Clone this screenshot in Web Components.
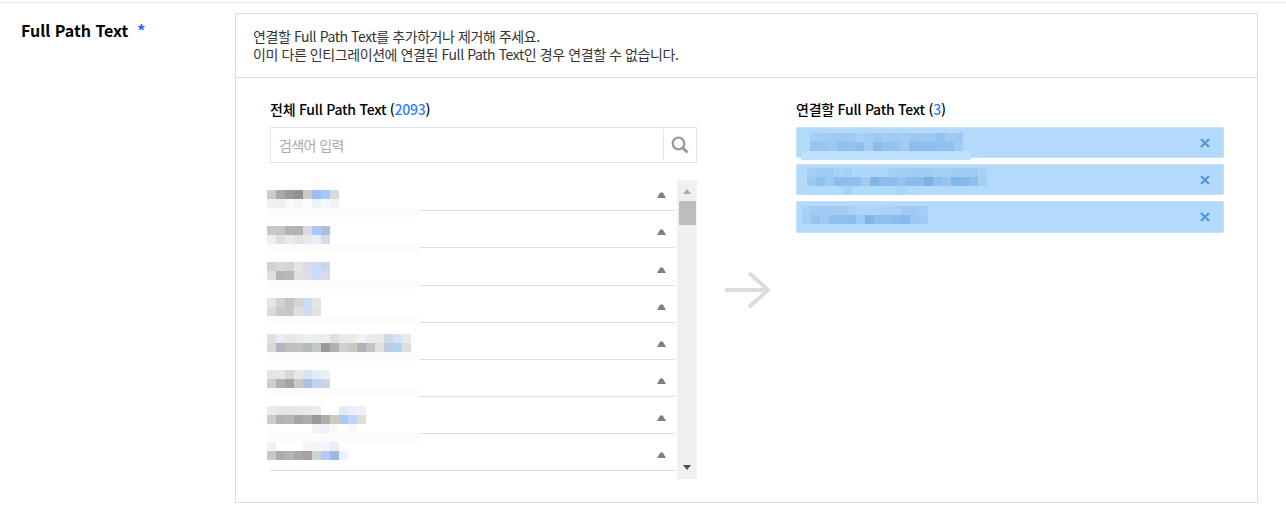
<!DOCTYPE html>
<html lang="ko">
<head>
<meta charset="utf-8">
<title>Full Path Text</title>
<style>
  html, body { margin: 0; background: #fff; }
  body { font-family: "Noto Sans CJK KR", "Noto Sans", sans-serif; color: #333; }
</style>
</head>
<body>
<form-field label="Full Path Text" required>
  <link-panel>
    <span slot="notice">연결할 Full Path Text를 추가하거나 제거해 주세요.<br>이미 다른 인티그레이션에 연결된 Full Path Text인 경우 연결할 수 없습니다.</span>

    <source-list slot="source" heading="전체 Full Path Text" count="2093">
      <list-row></list-row>
      <list-row></list-row>
      <list-row tall></list-row>
      <list-row></list-row>
      <list-row></list-row>
      <list-row></list-row>
      <list-row></list-row>
      <list-row></list-row>
      <blur-mosaic slot="overlay" style="left:-3px;top:1px" cells="fff,fff,fff,fff,fff,fcfcfc,fdfdfd,fcfcfc|cfcbc7,a9a9ab,989c9c,8e9290,cfc9c5,9cbdf7,a6c8fd,d9dadc|f0f0f0,f0f0f0,f8f9f8,f5f5f5,fdfcf8,eef2fb,f5f8ff,f2f2f2"></blur-mosaic>
      <blur-strip slot="overlay" style="left:-3px;top:28px"></blur-strip>
      <blur-mosaic slot="overlay" style="left:-3px;top:46px" cells="c9c8c6,c8c6c2,b3b3b7,b4b3b2,dcdae0,a9c8fd,a9c0dd,fbffff|eeeeee,e1dfdc,e8eaeb,e4e2e3,e8e8e9,e5edff,d2dde9"></blur-mosaic>
      <blur-strip slot="overlay" style="left:-3px;top:64px"></blur-strip>
      <blur-mosaic slot="overlay" style="left:-3px;top:82px" cells="d4d0d0,dad8d9,d0d5d4,e3e6e2,d9dce3,cbdcff,c9d6e5|e0dfdc,b7b4b7,b6b9b8,dfe1df,dcdfe5,cbdcfb,d9dce5"></blur-mosaic>
      <blur-strip slot="overlay" style="left:-3px;top:100px"></blur-strip>
      <blur-mosaic slot="overlay" style="left:-3px;top:118px" cells="e6e6e6,d3d2cb,c0c6c5,d6d3d5,cbdcfb,e6e6e6|dcdbda,c9cac9,c6c7c0,e1dfe2,ccdcf9,e2e2e2"></blur-mosaic>
      <blur-strip slot="overlay" style="left:-3px;top:136px"></blur-strip>
      <blur-mosaic slot="overlay" style="left:-3px;top:154px" cells="e2e0dd,ebedf0,e6e6e7,e9e9e7,eff1ef,ededec,eeeeed,e0dfdc,e9e9e9,eaeaea,f3f3f3,ebeae8,e8e8e6,cfd9ea,d4e3fc,e9e9eb|d9d7d2,b2b5bd,c0bebd,c4c0be,b3bab8,c3c7c5,9f999c,afb0b5,ced0d2,cbc8c0,aeb3ba,c0c3c2,e2e0dd,c0c9dd,b3d2f9,dcdde0"></blur-mosaic>
      <blur-strip slot="overlay" style="left:-3px;top:172px"></blur-strip>
      <blur-mosaic slot="overlay" style="left:-3px;top:190px" cells="e4e4e5,e8e8e3,d6d6dc,e8e8e9,dbe3f3,e3ebfc,eeeff1|cecdcf,b1b0ae,a4a4a1,c9c9d2,aec3da,bcd3fb,cdd5dd"></blur-mosaic>
      <blur-strip slot="overlay" style="left:-3px;top:208px"></blur-strip>
      <blur-mosaic slot="overlay" style="left:-3px;top:226px" cells="ecebe9,e4e5e7,e4e5e6,e6e7e7,e8e7e3,e9edf0,fff,fffffc,e6e9f5,e9f1fd,f1f1f1|cfccc6,b0b1b6,b5b6b7,a5a6a6,b0ada6,97999c,a8aeae,cdc9bd,abc9f0,bcd6fb,dcdeda|fefefe,fff,fff,fff,fff,f4f3f1,eff1f3,f8f9fa,fff,f8f8f8"></blur-mosaic>
      <blur-strip slot="overlay" style="left:-3px;top:253px"></blur-strip>
      <blur-mosaic slot="overlay" style="left:-3px;top:262px" cells="f1f1ef,fff,fff,fff,f6f6f6,f5f5f5,f3f6fd,e9edf7|cbc7c3,a6adb5,b5b7ae,aaa6ac,a5a2a0,ced5d6,b2c8fb,9fb8dd,e9f3fb"></blur-mosaic>
    </source-list>

    <target-list slot="target" heading="연결할 Full Path Text" count="3">
      <link-chip>
        <blur-strip slot="overlay" style="left:4px;top:23px;width:170px;--strip:#bfe0fd"></blur-strip>
        <blur-mosaic slot="overlay" style="left:13px;top:5px" cells="a6d0f7,a2ccf5,a0caf4,9fc9f3,9fc9f3,a8d1f7,a3cdf5,9fc9f3,a3cdf5,9fc9f3,a3cdf5,9cc7f2,9cc7f2,9cc7f2,93c2ef,9fc9f3,9cc8f3|94c4f0,9ac7f2,9fc9f3,8fbfee,94c2ef,8fbfed,a4cdf5,8bbdec,92c2ef,96c4f0,a2ccf5,8cbded,8ebfee,8ebfee,90c0ee,90c0ee,a1cbf4"></blur-mosaic>
      </link-chip>
      <link-chip>
        <blur-mosaic slot="overlay" style="left:10px;top:3px" cells="a4cef6,a0caf4,a0caf4,a9d2f8,a8d1f7,afd7fa,afd7fa,afd7fa,afd7fa,a6cff6,a3cdf5,a1cbf4,a1cbf4,a1cbf4,a4cef6,a4cef6,a1cbf4,a1cbf4,a1cbf4,a9d2f8|9bc8f2,90c0ee,9ecaf3,8bbcec,8ebfed,8ebfed,a0caf4,81b5e8,8bbcec,8bbcec,96c4f0,8abbeb,8bbcec,7bb0e5,8ec0ed,99c6f1,82b7e9,84b8e9,8ec0ed,a6cff6|b2dafb,b2dafb,b2dafb,b2dafb,a9d2f8,b2dafb,b2dafb,b2dafb,b2dafb,b2dafb,a9d2f8,b2dafb"></blur-mosaic>
      </link-chip>
      <link-chip tall>
        <blur-mosaic slot="overlay" style="left:5px;top:4px" cells="a8d1f7,a2ccf5,a0caf4,a3cdf5,a2ccf5,a7d0f7,add5f9,add5f9,abd4f8,a8d1f7,a8d1f7,9ecaf3,9ecaf3,a5cef6|a4cef6,94c3f0,9fc9f3,90c0ee,8fbfed,8dbeec,9ecaf3,81b5e8,8ec0ed,8ec0ed,8bbcec,87baea,9cc7f2,a1cbf4"></blur-mosaic>
      </link-chip>
    </target-list>
  </link-panel>
</form-field>

<script>
class FormField extends HTMLElement {
  constructor() {
    super();
    this.attachShadow({ mode: 'open' });
  }
  connectedCallback() {
    const star = this.hasAttribute('required') ? '<span class="star">*</span>' : '';
    this.shadowRoot.innerHTML = `
      <style>
        :host { display: block; border-top: 1px solid #e8e8e8; margin-top: 2px; padding: 10px 28px 0 0; }
        .wrap { display: flex; align-items: flex-start; }
        .label { width: 235px; flex: none; box-sizing: border-box; padding: 5px 0 0 21px; font-size: 16px; line-height: 24px; font-weight: 700; color: #000; }
        .star { color: #1a6dff; margin-left: 9px; }
        .content { flex: 1; min-width: 0; }
      </style>
      <div class="wrap">
        <div class="label">${this.getAttribute('label') || ''}${star}</div>
        <div class="content"><slot></slot></div>
      </div>
    `;
  }
}

class LinkPanel extends HTMLElement {
  constructor() {
    super();
    this.attachShadow({ mode: 'open' });
  }
  connectedCallback() {
    this.shadowRoot.innerHTML = `
      <style>
        :host { display: block; border: 1px solid #ddd; }
        .notice { padding: 14px 17px 14px; font-size: 14px; line-height: 17.5px; color: #333; letter-spacing: -0.42px; border-bottom: 1px solid #ddd; }
        .body { display: grid; grid-template-columns: 427px 99px 428px; padding: 22px 33px 23px 34px; }
        .arrow { display: flex; justify-content: center; padding: 170px 0 0 4px; }
        svg { display: block; }
      </style>
      <div class="notice"><slot name="notice"></slot></div>
      <div class="body">
        <slot name="source"></slot>
        <div class="arrow">
          <svg width="50" height="40" viewBox="0 0 50 40" fill="none" stroke="#dcdcdc" stroke-width="4">
            <path d="M1 20H43"/>
            <path d="M25 3L44 20L25 37"/>
          </svg>
        </div>
        <slot name="target"></slot>
      </div>
    `;
  }
}

class SourceList extends HTMLElement {
  constructor() {
    super();
    this.attachShadow({ mode: 'open' });
  }
  connectedCallback() {
    this.shadowRoot.innerHTML = `
      <style>
        :host { display: block; }
        h3 { margin: 0 0 9px; font-size: 14px; line-height: 18px; font-weight: 500; color: #000; letter-spacing: -0.25px; }
        h3 b { font-weight: 500; color: #2a7fff; }
        .list { position: relative; margin-top: 17px; height: 299px; display: flex; }
        .rows { flex: 1; min-width: 0; margin-right: 1px; }
        .track { width: 20px; flex: none; background: #f0f0f0; position: relative; display: flex; flex-direction: column; align-items: center; }
        .up { margin-top: 9px; width: 0; height: 0; border: 4.5px solid transparent; border-top: 0; border-bottom: 5px solid #a8a8a8; }
        .thumb { margin: 7px 0 0 1px; width: 17px; height: 24px; background: #bdbdbd; }
        .down { margin-top: auto; margin-bottom: 9px; width: 0; height: 0; border: 4.5px solid transparent; border-bottom: 0; border-top: 5px solid #505050; }
      </style>
      <h3>${this.getAttribute('heading')} (<b>${this.getAttribute('count')}</b>)</h3>
      <search-box placeholder="검색어 입력"></search-box>
      <div class="list">
        <div class="rows"><slot></slot></div>
        <div class="track"><div class="up"></div><div class="thumb"></div><div class="down"></div></div>
        <slot name="overlay"></slot>
      </div>
    `;
  }
}

class SearchBox extends HTMLElement {
  constructor() {
    super();
    this.attachShadow({ mode: 'open' });
  }
  connectedCallback() {
    this.shadowRoot.innerHTML = `
      <style>
        :host { display: flex; box-sizing: border-box; height: 36px; border: 1px solid #e2e2e2; }
        .input { flex: 1; padding-left: 8px; font-size: 14px; line-height: 34px; color: #aaa; letter-spacing: -0.6px; }
        .btn { width: 32px; margin: 1px 0; border-left: 1px solid #e6e6e6; display: flex; align-items: center; justify-content: center; }
        svg { display: block; }
      </style>
      <div class="input">${this.getAttribute('placeholder')}</div>
      <div class="btn">
        <svg width="18" height="18" viewBox="0 0 18 18" fill="none" stroke="#9a9a9a" stroke-width="2.3">
          <circle cx="7.5" cy="7.5" r="5.8"/>
          <path d="M11.6 11.6L16.5 16.5" stroke-width="3"/>
        </svg>
      </div>
    `;
  }
}

class ListRow extends HTMLElement {
  constructor() {
    super();
    this.attachShadow({ mode: 'open' });
  }
  connectedCallback() {
    this.shadowRoot.innerHTML = `
      <style>
        :host { display: flex; box-sizing: border-box; height: 37px; border-bottom: 1px solid #ddd; justify-content: flex-end; align-items: flex-end; border-bottom-right-radius: 2px; }
        :host(:first-child) { height: 31px; }
        :host([tall]) { height: 38px; }
        svg { display: block; margin: 0 10px 12px 0; }
      </style>
      <svg width="9" height="6" viewBox="0 0 9 6"><path d="M0 6L3.2 .4H5.8L9 6Z" fill="#808080"/></svg>
    `;
  }
}

class BlurMosaic extends HTMLElement {
  constructor() {
    super();
    this.attachShadow({ mode: 'open' });
  }
  connectedCallback() {
    // pixelated redaction blocks, 9px per cell
    const rows = (this.getAttribute('cells') || '').split('|').map((row) =>
      `<div class="r">${row.split(',').map((c) => `<i style="background:#${c}"></i>`).join('')}</div>`
    ).join('');
    this.shadowRoot.innerHTML = `
      <style>
        :host { display: block; position: absolute; }
        .r { display: flex; height: 9px; }
        i { display: block; width: 9px; height: 9px; flex: none; }
      </style>
      ${rows}
    `;
  }
}

class BlurStrip extends HTMLElement {
  constructor() {
    super();
    this.attachShadow({ mode: 'open' });
  }
  connectedCallback() {
    this.shadowRoot.innerHTML = `
      <style>
        :host { display: block; position: absolute; width: 153px; height: 9px; background: var(--strip, #fbfbfb); }
      </style>
    `;
  }
}

class TargetList extends HTMLElement {
  constructor() {
    super();
    this.attachShadow({ mode: 'open' });
  }
  connectedCallback() {
    this.shadowRoot.innerHTML = `
      <style>
        :host { display: block; }
        h3 { margin: 0 0 9px; font-size: 14px; line-height: 18px; font-weight: 500; color: #000; letter-spacing: -0.25px; }
        h3 b { font-weight: 500; color: #2a7fff; }
        .chips { display: flex; flex-direction: column; gap: 6px; }
      </style>
      <h3>${this.getAttribute('heading')} (<b>${this.getAttribute('count')}</b>)</h3>
      <div class="chips"><slot></slot></div>
    `;
  }
}

class LinkChip extends HTMLElement {
  constructor() {
    super();
    this.attachShadow({ mode: 'open' });
  }
  connectedCallback() {
    this.shadowRoot.innerHTML = `
      <style>
        :host { display: flex; position: relative; box-sizing: border-box; height: 31px; background: #b3d9fb; border: 1px solid #c0e0fc; border-radius: 2px; justify-content: flex-end; align-items: center; padding-right: 13px; }
        :host([tall]) { height: 32px; }
        svg { display: block; }
      </style>
      <slot name="overlay"></slot>
      <svg width="10" height="10" viewBox="0 0 10 10" stroke="#4f94dc" stroke-width="2" fill="none">
        <path d="M1 1L9 9M9 1L1 9"/>
      </svg>
    `;
  }
}

customElements.define('form-field', FormField);
customElements.define('link-panel', LinkPanel);
customElements.define('source-list', SourceList);
customElements.define('search-box', SearchBox);
customElements.define('list-row', ListRow);
customElements.define('blur-mosaic', BlurMosaic);
customElements.define('blur-strip', BlurStrip);
customElements.define('target-list', TargetList);
customElements.define('link-chip', LinkChip);
</script>
</body>
</html>
